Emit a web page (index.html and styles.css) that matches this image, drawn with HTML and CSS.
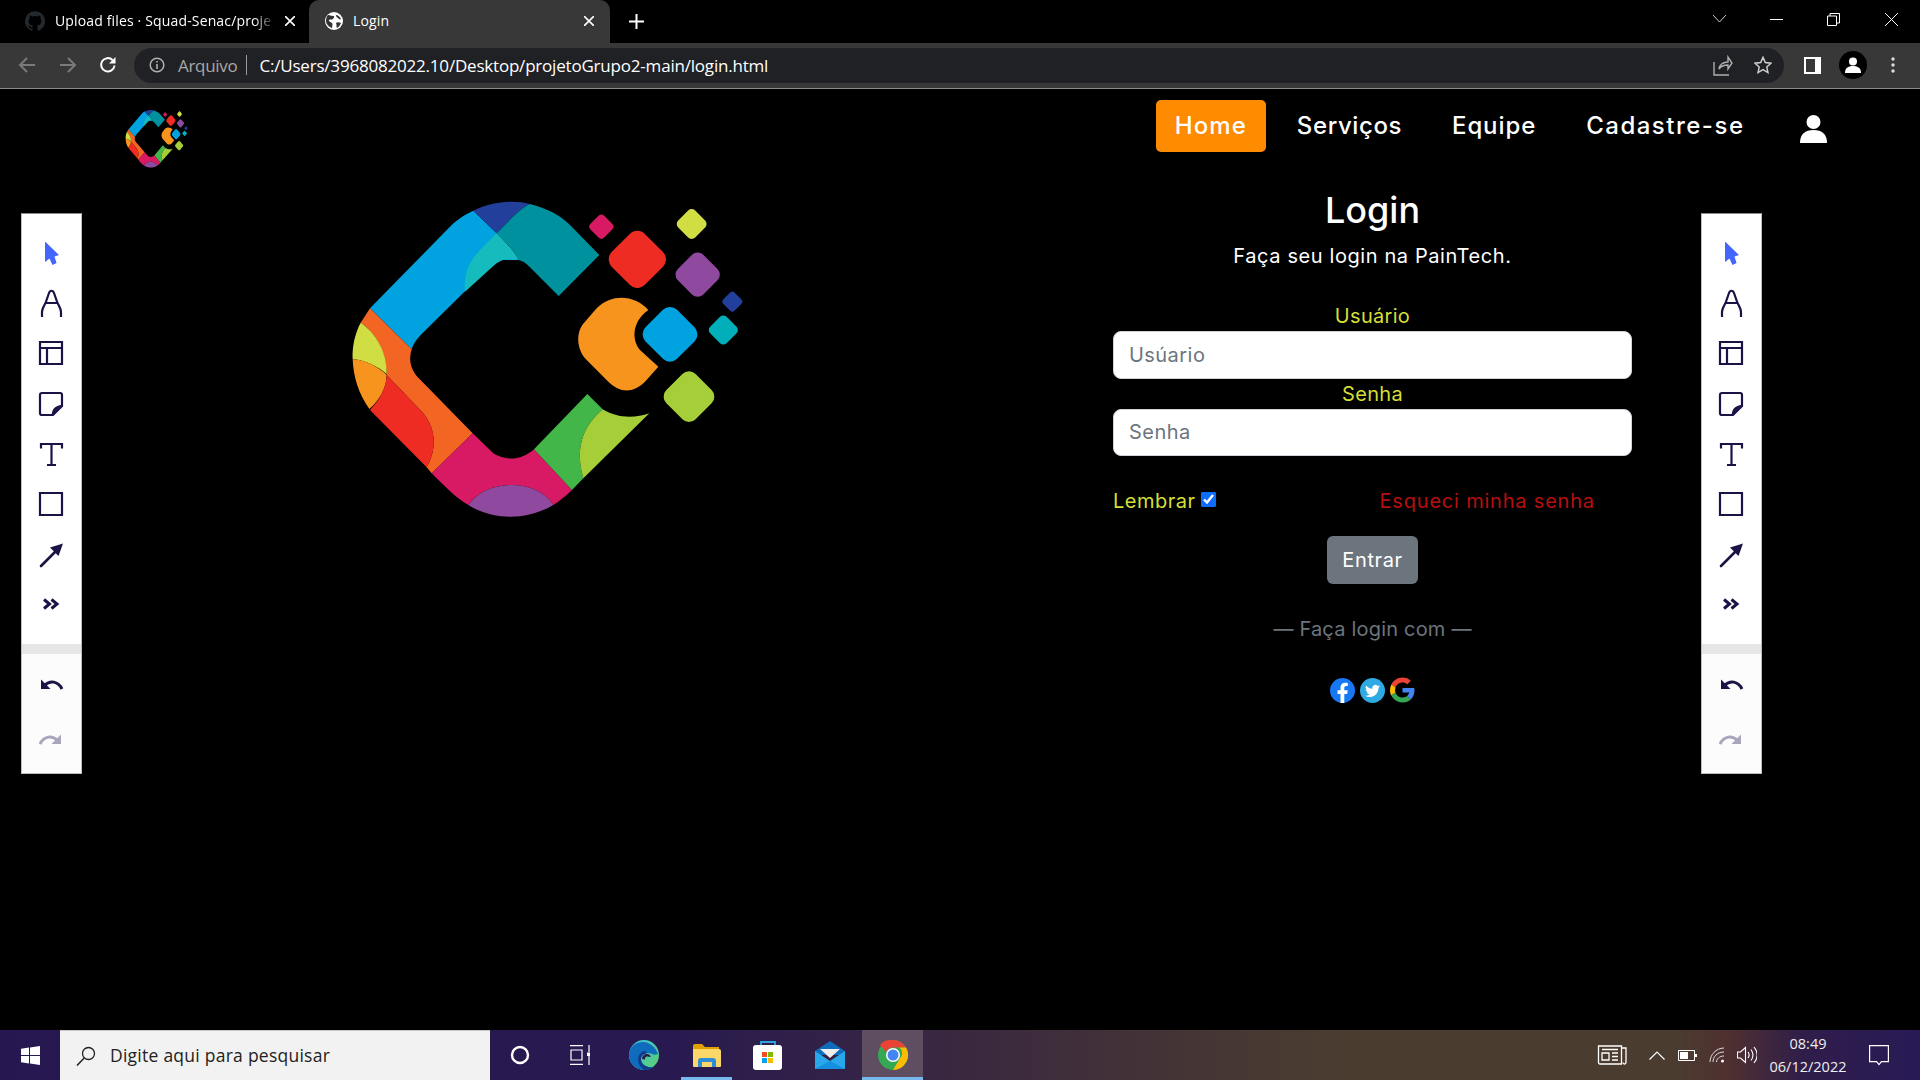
FILE: index.html
```html
<!DOCTYPE html>
<html lang="pt-BR">
<head>
<meta charset="utf-8">
<title>Login</title>
<link rel="stylesheet" href="styles.css">
</head>
<body>
<svg class="defs" aria-hidden="true">
  <defs>
    <symbol id="logo" viewBox="0 0 1320 1050" preserveAspectRatio="none">
      <path fill="#00a2e0" d="M430 92C400 105 380 120 360 140L120 385L245 508C250 490 262 475 275 462L500 240L570 240L500 160Z"/>
      <path fill="#15bbbd" d="M500 160C530 190 555 215 565 240C530 232 510 240 490 258L405 335C400 280 420 240 450 210Z"/>
      <path fill="#223f9c" d="M430 92C480 65 550 58 600 72C570 85 540 120 500 160Z"/>
      <path fill="#00919f" d="M600 72C650 85 690 105 720 135L808 225L686 348L600 262C590 250 578 243 565 240C555 215 530 190 500 160C540 120 570 85 600 72Z"/>
      <path fill="#f26522" d="M120 385L245 508C236 535 240 565 262 590L428 760L305 880L290 862C320 810 320 750 280 700L170 585C170 520 140 460 92 428Z"/>
      <path fill="#d0de44" d="M92 428C140 460 172 520 170 582C150 565 110 540 68 538C66 500 75 460 92 428Z"/>
      <path fill="#f7941d" d="M68 538C110 540 150 565 170 585C170 620 150 660 118 687C85 640 70 590 68 538Z"/>
      <path fill="#ef2c23" d="M170 585L280 700C320 750 320 810 290 862L120 690C150 660 170 620 170 585Z"/>
      <path fill="#d71a63" d="M428 760L490 820C530 845 575 840 612 808L726 930C700 955 685 965 670 975C620 895 470 895 415 975C380 955 350 925 305 880Z"/>
      <path fill="#8f4a9f" d="M415 975C470 895 620 895 670 975C590 1022 490 1022 415 975Z"/>
      <path fill="#43b649" d="M772 642L818 688C770 730 730 790 760 895L726 930L612 808Z"/>
      <path fill="#a6ce39" d="M818 688C860 715 915 715 958 700L760 895C730 790 770 730 818 688Z"/>
      <path fill="#f7941d" d="M955 390C920 350 850 335 800 385L765 425C735 455 740 510 770 540L835 605C870 640 910 640 945 605L985 560L930 510C905 480 905 425 955 390Z"/>
      <rect x="785" y="111" width="58" height="58" rx="12" fill="#d71a63" transform="rotate(45 814 140)"/>
      <rect x="1049" y="96" width="72" height="72" rx="15" fill="#d0de44" transform="rotate(45 1085 132)"/>
      <rect x="852" y="168" width="140" height="140" rx="32" fill="#ef2c23" transform="rotate(45 922 238)"/>
      <rect x="1049" y="230" width="108" height="108" rx="24" fill="#8f4a9f" transform="rotate(45 1103 284)"/>
      <rect x="1183" y="341" width="48" height="48" rx="10" fill="#223f9c" transform="rotate(45 1207 365)"/>
      <rect x="1145" y="415" width="70" height="70" rx="14" fill="#00afb9" transform="rotate(45 1180 450)"/>
      <rect x="953" y="396" width="134" height="134" rx="30" fill="#00a2e0" transform="rotate(45 1020 463)"/>
      <rect x="1015" y="588" width="124" height="124" rx="28" fill="#a6ce39" transform="rotate(45 1077 650)"/>
    </symbol>
    <symbol id="t-pointer" viewBox="0 0 30 30"><path fill="#4464ff" d="M9 3.500L23 17L18.500 18.500L20.500 25L16.500 27L13.500 20.500L9 24Z"/></symbol>
    <symbol id="t-pen" viewBox="0 0 30 30"><path fill="none" stroke="#1a1446" stroke-width="2.200" d="M6 29v-5c0-3 2-6 3.500-9L13 5c1-3 4-3 5 0l3.500 10c1.500 3 3.500 6 3.500 9v5M10 15h11"/></symbol>
    <symbol id="t-table" viewBox="0 0 30 30"><path fill="none" stroke="#1a1446" stroke-width="2.200" d="M4 4h22v22H4zM4 10h22M11 10v16"/></symbol>
    <symbol id="t-note" viewBox="0 0 30 30"><path fill="none" stroke="#1a1446" stroke-width="2.200" d="M6 4h18a2 2 0 0 1 2 2v11l-9 9H6a2 2 0 0 1-2-2V6a2 2 0 0 1 2-2z"/><path fill="#1a1446" d="M26 16l-10 11c-1-6 3-11 10-11z"/></symbol>
    <symbol id="t-text" viewBox="0 0 30 30"><path fill="none" stroke="#1a1446" stroke-width="2.200" d="M5 9.500V5h21v4.500M15.500 5v21M11 26h9"/></symbol>
    <symbol id="t-rect" viewBox="0 0 30 30"><path fill="none" stroke="#1a1446" stroke-width="2.200" d="M4 4h22v22H4z"/></symbol>
    <symbol id="t-arrow" viewBox="0 0 30 30"><path fill="none" stroke="#1a1446" stroke-width="2.600" stroke-linecap="round" d="M5 27L20 12"/><path fill="#1a1446" d="M27 4.500L14 8.500L22.500 17Z"/></symbol>
    <symbol id="t-more" viewBox="0 0 30 30"><path fill="none" stroke="#1a1446" stroke-width="3" d="M8 10.500l5.500 4.500-5.500 4.500M15.500 10.500L21 15l-5.500 4.500"/></symbol>
    <symbol id="t-undo" viewBox="0 0 30 30"><path fill="none" stroke="currentColor" stroke-width="3" d="M26 20C22 12 14 11 9 16"/><path fill="currentColor" d="M5 10.500V20h9.500Z"/></symbol>
  </defs>
</svg>

<header class="tabstrip">
  <div class="tab tab-inactive">
    <svg class="tab-icon" viewBox="0 0 24 24"><path fill="#24292e" d="M12 .3a12 12 0 00-3.800 23.400c.600.100.800-.300.800-.600v-2c-3.300.700-4-1.600-4-1.600-.600-1.400-1.400-1.800-1.400-1.800-1-.700.100-.700.100-.700 1.200 0 1.900 1.200 1.900 1.200 1 1.800 2.800 1.300 3.500 1 0-.800.400-1.300.700-1.600-2.700-.300-5.500-1.300-5.500-6 0-1.200.500-2.300 1.300-3.100-.200-.400-.600-1.600 0-3.200 0 0 1-.300 3.400 1.200a11.500 11.500 0 016 0c2.300-1.500 3.300-1.200 3.300-1.200.600 1.600.200 2.800 0 3.200.900.800 1.300 1.900 1.300 3.200 0 4.600-2.800 5.600-5.500 5.900.500.400.900 1 .9 2.200v3.300c0 .300.100.700.800.600A12 12 0 0012 .3"/></svg>
    <span class="tab-title tab-title-fade">Upload files · Squad-Senac/proje</span>
    <svg class="tab-close" viewBox="0 0 10 10"><path stroke="#fff" stroke-width="1.600" d="M0 0l10 10M10 0L0 10"/></svg>
  </div>
  <div class="tab tab-active">
    <svg class="tab-icon globe" viewBox="0 0 18 18"><circle cx="9" cy="9" r="9" fill="#fff"/><path fill="#333" d="M3 3c2 0 3 1 5 1s1 2 0 3-3 0-4 1 2 2 3 3 0 4 0 5C4 15 1 12 1 9s1-5 2-6zM11 3c2 0 4 2 5 4-1 1-2 0-3-1s-2-1-2-3zM11 11c1-1 3-1 5 0-1 2-2 4-4 5-1-1 0-3-1-5z"/></svg>
    <span class="tab-title">Login</span>
    <svg class="tab-close" viewBox="0 0 10 10"><path stroke="#fff" stroke-width="1.600" d="M0 0l10 10M10 0L0 10"/></svg>
  </div>
  <svg class="new-tab" viewBox="0 0 15 15"><path stroke="#fff" stroke-width="2" d="M7.500 0v15M0 7.500h15"/></svg>
  <div class="window-controls">
    <svg class="win-chevron" viewBox="0 0 13 8"><path fill="none" stroke="#ccc" d="M0 0l6.500 7L13 0"/></svg>
    <svg class="win-min" viewBox="0 0 13 13"><path stroke="#fff" d="M0 6.500h13"/></svg>
    <svg class="win-restore" viewBox="0 0 13 13"><path fill="none" stroke="#fff" d="M.5 3h9v9.500h-9zM3 3V.5h9.500V10H9.500"/></svg>
    <svg class="win-close" viewBox="0 0 13 13"><path stroke="#fff" d="M0 0l13 13M13 0L0 13"/></svg>
  </div>
</header>

<div class="browser-bar">
  <svg class="nav-btn" viewBox="0 0 18 18"><path fill="none" stroke="#7a7a7a" stroke-width="2" d="M17 9H2M9 2L2 9l7 7"/></svg>
  <svg class="nav-btn" viewBox="0 0 18 18"><path fill="none" stroke="#7a7a7a" stroke-width="2" d="M1 9h15M9 2l7 7-7 7"/></svg>
  <svg class="nav-btn" viewBox="0 0 18 18"><path fill="none" stroke="#fff" stroke-width="2" d="M15.500 9.500A6.700 6.700 0 1 1 13.500 4"/><path fill="#fff" d="M16.500 1v6.500H10Z"/></svg>
  <div class="address">
    <svg class="info" viewBox="0 0 16 16"><circle cx="8" cy="8" r="6.800" fill="none" stroke="#b0b0b0" stroke-width="1.500"/><path stroke="#b0b0b0" stroke-width="1.600" d="M8 7v5M8 4v1.600"/></svg>
    <span class="scheme">Arquivo</span>
    <span class="sep"></span>
    <span class="url">C:/Users/3968082022.10/Desktop/projetoGrupo2-main/login.html</span>
    <svg class="share" viewBox="0 0 20 22"><path fill="none" stroke="#b0b0b0" stroke-width="1.400" d="M1 8v13h15M6 15c1-5 5-7 9-7V3l4 6-4 6v-4c-4 0-7 1-9 4z"/></svg>
    <svg class="star" viewBox="0 0 20 20"><path fill="none" stroke="#d0d0d0" stroke-width="1.600" d="M10 1.500l2.600 5.800 6.300.700-4.700 4.200 1.300 6.200L10 15.200l-5.500 3.200 1.300-6.200L1.100 8l6.300-.700z"/></svg>
  </div>
  <div class="bar-right">
    <svg class="panel" viewBox="0 0 17 17"><path fill="#fff" fill-rule="evenodd" d="M0 0h17v17H0zM2 2v13h9V2z"/></svg>
    <svg class="avatar" viewBox="0 0 28 28"><circle cx="14" cy="14" r="14" fill="#000"/><circle cx="14" cy="10.500" r="4" fill="#fff"/><path fill="#fff" d="M6 22c0-5 3-7 8-7s8 2 8 7z"/></svg>
    <svg class="menu" viewBox="0 0 4 16"><circle cx="2" cy="2" r="1.700" fill="#ddd"/><circle cx="2" cy="8" r="1.700" fill="#ddd"/><circle cx="2" cy="14" r="1.700" fill="#ddd"/></svg>
  </div>
</div>

<main class="page">
  <nav class="topnav">
    <svg class="small-logo"><use href="#logo"/></svg>
    <div class="nav-links">
      <a class="nav-link nav-home">Home</a>
      <a class="nav-link nav-serv">Serviços</a>
      <a class="nav-link nav-equipe">Equipe</a>
      <a class="nav-link nav-cad">Cadastre-se</a>
      <svg class="nav-user" viewBox="0 0 27 28"><circle cx="13.500" cy="7" r="7" fill="#fff"/><path fill="#fff" d="M0 28c0-9 5-13 13.500-13S27 19 27 28z"/></svg>
    </div>
  </nav>

  <section class="content">
    <svg class="big-logo"><use href="#logo"/></svg>
    <form class="login">
      <h1 class="login-title">Login</h1>
      <p class="login-sub">Faça seu login na PainTech.</p>
      <label class="field-label field-first" for="u">Usuário</label>
      <input class="field field-tall" id="u" type="text" placeholder="Usúario">
      <label class="field-label" for="s">Senha</label>
      <input class="field field-short" id="s" type="password" placeholder="Senha">
      <div class="options">
        <label class="remember">Lembrar <input class="check" type="checkbox" checked></label>
        <a class="forgot">Esqueci minha senha</a>
      </div>
      <button class="submit" type="button">Entrar</button>
      <p class="divider">— Faça login com —</p>
      <div class="socials">
        <svg class="social" viewBox="0 0 25 25"><circle cx="12.500" cy="12.500" r="12.500" fill="#1877f2"/><path fill="#fff" d="M10.500 25V16H7.500v-3.700h3V9.500c0-3.100 1.900-4.800 4.600-4.800 1.300 0 2.700.2 2.700.2v3h-1.500c-1.500 0-2 .9-2 1.900v2.500h3.400l-.5 3.700h-2.900v9z"/></svg>
        <svg class="social" viewBox="0 0 25 25"><circle cx="12.500" cy="12.500" r="12.500" fill="#2daae1"/><g transform="translate(5 5.500) scale(.625)"><path fill="#fff" d="M23.953 4.570a10 10 0 01-2.825.775 4.958 4.958 0 002.163-2.723c-.951.555-2.005.959-3.127 1.184a4.920 4.920 0 00-8.384 4.482C7.690 8.095 4.067 6.130 1.640 3.162a4.822 4.822 0 00-.666 2.475c0 1.710.870 3.213 2.188 4.096a4.904 4.904 0 01-2.228-.616v.060a4.923 4.923 0 003.946 4.827 4.996 4.996 0 01-2.212.085 4.936 4.936 0 004.604 3.417 9.867 9.867 0 01-6.102 2.105c-.390 0-.779-.023-1.170-.067a13.995 13.995 0 007.557 2.209c9.053 0 13.998-7.496 13.998-13.985 0-.210 0-.420-.015-.630A9.935 9.935 0 0024 4.590z"/></g></svg>
        <svg class="social social-g" viewBox="0 0 48 48"><path fill="#EA4335" d="M24 9.500c3.540 0 6.710 1.220 9.210 3.600l6.850-6.850C35.900 2.380 30.470 0 24 0 14.620 0 6.510 5.380 2.560 13.220l7.980 6.190C12.430 13.720 17.740 9.500 24 9.500z"/><path fill="#4285F4" d="M46.980 24.550c0-1.570-.150-3.090-.380-4.550H24v9.020h12.940c-.580 2.960-2.260 5.480-4.780 7.180l7.730 6c4.510-4.180 7.090-10.360 7.090-17.650z"/><path fill="#FBBC05" d="M10.530 28.590c-.480-1.450-.760-2.990-.760-4.590s.270-3.140.760-4.590l-7.980-6.190C.920 16.460 0 20.120 0 24c0 3.880.920 7.540 2.560 10.780l7.970-6.190z"/><path fill="#34A853" d="M24 48c6.480 0 11.930-2.130 15.890-5.810l-7.730-6c-2.150 1.450-4.920 2.300-8.160 2.300-6.260 0-11.570-4.220-13.470-9.910l-7.980 6.190C6.510 42.620 14.620 48 24 48z"/></svg>
      </div>
    </form>
  </section>

  <aside class="drawbar drawbar-left">
    <div class="draw-main">
      <svg class="draw-icon"><use href="#t-pointer"/></svg>
      <svg class="draw-icon"><use href="#t-pen"/></svg>
      <svg class="draw-icon"><use href="#t-table"/></svg>
      <svg class="draw-icon"><use href="#t-note"/></svg>
      <svg class="draw-icon"><use href="#t-text"/></svg>
      <svg class="draw-icon"><use href="#t-rect"/></svg>
      <svg class="draw-icon"><use href="#t-arrow"/></svg>
      <svg class="draw-icon"><use href="#t-more"/></svg>
    </div>
    <div class="draw-sep"></div>
    <div class="draw-hist">
      <svg class="draw-icon undo"><use href="#t-undo"/></svg>
      <svg class="draw-icon redo"><use href="#t-undo"/></svg>
    </div>
  </aside>
  <aside class="drawbar drawbar-right">
    <div class="draw-main">
      <svg class="draw-icon"><use href="#t-pointer"/></svg>
      <svg class="draw-icon"><use href="#t-pen"/></svg>
      <svg class="draw-icon"><use href="#t-table"/></svg>
      <svg class="draw-icon"><use href="#t-note"/></svg>
      <svg class="draw-icon"><use href="#t-text"/></svg>
      <svg class="draw-icon"><use href="#t-rect"/></svg>
      <svg class="draw-icon"><use href="#t-arrow"/></svg>
      <svg class="draw-icon"><use href="#t-more"/></svg>
    </div>
    <div class="draw-sep"></div>
    <div class="draw-hist">
      <svg class="draw-icon undo"><use href="#t-undo"/></svg>
      <svg class="draw-icon redo"><use href="#t-undo"/></svg>
    </div>
  </aside>
</main>

<footer class="taskbar">
  <svg class="win-logo" viewBox="0 0 19 19"><path fill="#fff" d="M0 2.700L8 1.500v7.500H0zM9 1.400L19 0v9H9zM0 10h8v7.500L0 16.300zM9 10h10v9L9 17.600z"/></svg>
  <div class="search">
    <svg class="search-icon" viewBox="0 0 20 20"><circle cx="12.500" cy="7.500" r="6" fill="none" stroke="#222" stroke-width="1.300"/><path stroke="#222" stroke-width="1.500" d="M8.200 12L1 19.500"/></svg>
    <span class="search-text">Digite aqui para pesquisar</span>
  </div>
  <div class="task-apps">
    <div class="app app-plain"><svg class="cortana" viewBox="0 0 20 20"><circle cx="10" cy="10" r="8" fill="none" stroke="#fff" stroke-width="2.400"/></svg></div>
    <div class="app app-plain"><svg class="taskview" viewBox="0 0 20 20"><path fill="none" stroke="#fff" stroke-width="1.200" d="M0 .6h13M0 19.400h13M1 5h11v10H1zM19 0v7M19 11v9"/><rect x="17" y="7.500" width="3.500" height="3.500" fill="#fff"/></svg></div>
    <div class="app app-edge"><svg class="app-icon" viewBox="0 0 30 30"><defs><linearGradient id="eg" x1="0" y1="0" x2="1" y2="1"><stop offset="0" stop-color="#36c0e8"/><stop offset="1" stop-color="#5fd06a"/></linearGradient></defs><circle cx="15" cy="15" r="15" fill="url(#eg)"/><path fill="#0f6cbd" d="M14 2C6 2 0 8 0 15c0 8 7 15 15 15 4 0 7-1 10-3-5 1-13-1-13-8 0-3 3-6 7-6s5 3 10 1C27 8 21 2 14 2z"/><path fill="#123b8c" d="M12 19c0 7 8 9 13 8-3 2-6 3-10 3-4-3-6-7-6-11 0-4 3-7 6-8 2 0 3 1 3 2-3 1-6 3-6 6z"/><path fill="#281a50" d="M13 19c0-3 2.500-5 5-5s4 2 3.500 3c-1 0-2-.5-3.500-.5s-2 1-2 3c-1 0-3-.5-3-.5z"/></svg></div>
    <div class="app app-open"><svg class="app-icon folder" viewBox="0 0 28 23"><path fill="#e0a100" d="M0 2a2 2 0 0 1 2-2h7l3 3h14v4H0z"/><path fill="#fbd669" d="M0 5h26a2 2 0 0 1 2 2v15a1 1 0 0 1-1 1H1a1 1 0 0 1-1-1z"/><path fill="#2f8fd6" d="M5 23v-6a3 3 0 0 1 3-3h12a3 3 0 0 1 3 3v6h-4v-5H9v5z"/></svg></div>
    <div class="app app-store"><svg class="app-icon" viewBox="0 0 30 30"><path fill="none" stroke="#2aa7e0" stroke-width="1.800" d="M8 8V2h14v6"/><rect y="5" width="29" height="25" rx="3" fill="#fff"/><rect x="9" y="12" width="5" height="5" fill="#f25022"/><rect x="15" y="12" width="5" height="5" fill="#7fba00"/><rect x="9" y="18" width="5" height="5" fill="#00a4ef"/><rect x="15" y="18" width="5" height="5" fill="#ffb900"/></svg></div>
    <div class="app app-mail"><svg class="app-icon" viewBox="0 0 30 28"><path fill="#0f6cbd" d="M15 0L30 10v4H0v-4z"/><path fill="#eee" d="M5 8h20l-10 9z"/><path fill="#28a8ea" d="M0 10l15 10 15-10v18H0z"/><path fill="#1490df" d="M0 28l15-8 15 8z"/></svg></div>
    <div class="app app-active"><svg class="app-icon" viewBox="0 0 30 30"><circle cx="15" cy="15" r="15" fill="#34a853"/><path fill="#ea4335" d="M15 0a15 15 0 0 1 13 7.500H15a7.500 7.500 0 0 0-7 5L2 4.700A15 15 0 0 1 15 0z"/><path fill="#fbbc05" d="M28 7.500A15 15 0 0 1 15 30l6.500-11a7.500 7.500 0 0 0 0-11.500z"/><circle cx="15" cy="15" r="7" fill="#fff"/><circle cx="15" cy="15" r="5.500" fill="#4285f4"/></svg></div>
  </div>
  <div class="tray">
    <svg class="tray-news" viewBox="0 0 30 20"><path fill="none" stroke="#fff" stroke-width="1.300" d="M1.500 1h23v18H3a1.500 1.500 0 0 1-1.500-1.500zM24.500 3H29v14.500a1.500 1.500 0 0 1-3 0M5 4.500h16M5 8h7v7H5zM15 8h6M15 11.500h6M15 15h6"/></svg>
    <svg class="tray-caret" viewBox="0 0 16 9"><path fill="none" stroke="#fff" stroke-width="1.200" d="M.5 8.500L8 1l7.500 7.500"/></svg>
    <svg class="tray-batt" viewBox="0 0 19 11"><path fill="none" stroke="#fff" d="M.5.500h16v10H.5z"/><rect x="2" y="2" width="8" height="7" fill="#fff"/><rect x="17" y="4" width="2" height="3" fill="#fff"/></svg>
    <svg class="tray-wifi" viewBox="0 0 16 16"><g fill="none" stroke="#ddd" stroke-width="1"><path d="M1 15C1 8 7 1 15 1"/><path d="M4 15c0-5 4-10 11-10"/><path d="M7.500 15c0-3 3-6 7.500-6"/></g><circle cx="13.500" cy="14" r="1.500" fill="#fff"/></svg>
    <svg class="tray-vol" viewBox="0 0 20 20"><path fill="none" stroke="#fff" stroke-width="1.100" d="M.5 7h3l5-4.500v15L3.500 13h-3zM11 7c1.500 2 1.500 4 0 6M14 4.500c2.500 3.500 2.500 7.500 0 11M17 2c4 5 4 11 0 16"/></svg>
    <div class="clock"><span>08:49</span><span>06/12/2022</span></div>
    <svg class="tray-note" viewBox="0 0 20 21"><path fill="none" stroke="#fff" stroke-width="1.200" d="M.6.600h18.800v16h-7l-2.400 3-2.400-3h-7z"/></svg>
  </div>
</footer>
</body>
</html>
```

FILE: styles.css
```css
* { box-sizing: border-box; }
html, body { margin: 0; height: 100%; }
body {
  width: 1920px;
  height: 1080px;
  overflow: hidden;
  display: flex;
  flex-direction: column;
  background: #000;
  font-family: "Inter", "Liberation Sans", sans-serif;
  color: #fff;
}
.defs { width: 0; height: 0; position: absolute; }

/* browser tab strip */
.tabstrip { height: 43px; display: flex; align-items: stretch; background: #000; flex: none; }
.tab { display: flex; align-items: center; padding-bottom: 2px; }
.tab-inactive { width: 309px; padding-left: 25px; padding-right: 14px; }
.tab-active { width: 301px; padding-left: 16px; padding-right: 16px; background: #383838; border-radius: 10px 10px 0 0; }
.tab-icon { width: 20px; height: 20px; flex: none; }
.globe { width: 18px; height: 18px; }
.tab-title {
  font: 14px "Open Sans", "Liberation Sans", sans-serif;
  margin-left: 10px;
  white-space: nowrap;
  letter-spacing: .15px;
}
.tab-title-fade {
  -webkit-mask-image: linear-gradient(90deg, #000 92%, rgba(0, 0, 0, .2) 100%);
  mask-image: linear-gradient(90deg, #000 92%, rgba(0, 0, 0, .2) 100%);
}
.tab-close { width: 10px; height: 10px; margin-left: auto; flex: none; }
.new-tab { width: 15px; height: 15px; align-self: center; margin-left: 19px; }
.window-controls { margin-left: auto; width: 300px; display: flex; align-items: center; padding-left: 93px; }
.win-chevron { width: 13px; height: 8px; margin-bottom: 5px; }
.win-min { width: 13px; height: 13px; margin-left: 44px; margin-bottom: 5px; }
.win-restore { width: 13px; height: 13px; margin-left: 44px; margin-bottom: 5px; }
.win-close { width: 13px; height: 13px; margin-left: 45px; margin-bottom: 5px; }

/* browser toolbar */
.browser-bar { height: 46px; flex: none; display: flex; align-items: center; padding: 0 0 1px 7px; background: #383838; border-bottom: 1px solid #8a8a8a; }
.nav-btn { width: 18px; height: 18px; margin: 0 11px; flex: none; }
.nav-btn:nth-child(2) { margin-left: 12px; margin-right: 11px; }
.nav-btn:nth-child(3) { margin-right: 10px; }
.address { width: 1650px; height: 35px; margin-left: 7px; flex: none; background: #202124; border-radius: 18px; display: flex; align-items: center; padding: 0 12px 0 15px; font: 17px "Open Sans", "Liberation Sans", sans-serif; letter-spacing: -.2px; }
.info { width: 16px; height: 16px; flex: none; }
.scheme { margin-left: 13px; color: #a8a8a8; letter-spacing: -.3px; }
.sep { width: 1px; height: 20px; background: #9a9a9a; margin: 0 12px 0 9px; }
.url { color: #fff; white-space: nowrap; }
.share { width: 20px; height: 22px; margin-left: auto; }
.star { width: 18px; height: 18px; margin-left: 21px; }
.bar-right { display: flex; align-items: center; flex: 1; padding-left: 20px; }
.panel { width: 17px; height: 17px; }
.avatar { width: 28px; height: 28px; margin-left: 18px; }
.menu { width: 4px; height: 16px; margin-left: 24px; }

/* page */
.page { flex: 1; position: relative; background: #000; min-height: 0; }
.topnav { height: 91px; display: flex; align-items: flex-start; padding: 11px 93px 0 122px; }
.small-logo { width: 70px; height: 64px; margin-top: 6px; flex: none; }
.nav-links { margin-left: auto; display: flex; align-items: center; height: 52px; }
.nav-link { font-size: 24px; font-weight: 500; letter-spacing: 1.100px; color: #fff; line-height: 52px; }
.nav-home { background: #ff8c00; border-radius: 5px; padding: 0 18px; width: 110px; text-align: center; }
.nav-serv { margin-left: 31px; letter-spacing: .6px; }
.nav-equipe { margin-left: 50px; letter-spacing: .9px; }
.nav-cad { margin-left: 50px; letter-spacing: 1.500px; }
.nav-user { width: 27px; height: 28px; margin-left: 55.500px; margin-top: 5px; }

.content { display: flex; align-items: flex-start; padding: 0 288px 0 330px; }
.big-logo { width: 440px; height: 350px; flex: none; }
.login { width: 519px; margin-left: auto; display: flex; flex-direction: column; align-items: center; padding-top: 10px; }
.login-title { margin: 0; font-size: 36px; line-height: 40px; font-weight: 500; }
.login-sub { margin: 11px 0 0; font-size: 20px; line-height: 30px; font-weight: 400; letter-spacing: .6px; }
.field-label { font-size: 20px; line-height: 28px; color: #d4df36; margin-top: 0; margin-bottom: 1px; letter-spacing: .3px; }
.field-first { margin-top: 31px; }
.field { width: 100%; height: 47px; border: 1px solid #ced4da; border-radius: 8px; background: #fff; padding: 0 15px; font: 20px "Inter", sans-serif; letter-spacing: .45px; color: #212529; flex: none; }
.field-tall { height: 48px; margin-bottom: 1px; }
.field-short { padding-bottom: 2px; }
.field::placeholder { color: #6c757d; opacity: 1; }
.options { width: 100%; height: 30px; margin-top: 30px; display: flex; align-items: center; }
.remember { font-size: 20px; line-height: 30px; color: #d4df36; display: flex; align-items: center; letter-spacing: .5px; }
.check { width: 15px; height: 15px; margin: 0 0 4px 5px; accent-color: #0d6efd; }
.forgot { font-size: 20px; color: #b70f0f; margin-left: 164px; white-space: nowrap; letter-spacing: .8px; }
.submit { width: 91px; height: 48px; margin-top: 20px; border: 0; border-radius: 6px; background: #6c757d; color: #fff; font: 20px "Inter", sans-serif; letter-spacing: .6px; }
.divider { margin: 30px 0 0; font-size: 20px; line-height: 30px; color: #6c757d; letter-spacing: .2px; }
.socials { margin-top: 33px; display: flex; gap: 5px; align-items: flex-end; height: 26px; }
.social { width: 25px; height: 25px; }
.social-g { height: 26px; }

/* floating draw toolbars */
.drawbar { position: absolute; top: 124px; width: 61px; height: 561px; background: #fff; border: 1px solid #bdbdbd; border-top-color: #888; display: flex; flex-direction: column; }
.drawbar-left { left: 21px; }
.drawbar-right { left: 1701px; }
.draw-main { height: 430px; padding-top: 24px; display: flex; flex-direction: column; align-items: center; gap: 20.200px; }
.draw-sep { height: 10px; background: #e6e6e6; flex: none; }
.draw-hist { flex: 1; padding-top: 15px; display: flex; flex-direction: column; align-items: center; gap: 25px; background: #fcfcfc; }
.draw-icon { width: 30px; height: 30px; flex: none; margin-right: 2px; }
.undo { color: #1a1446; }
.redo { color: #a8a6bd; transform: scaleX(-1); }

/* windows taskbar */
.taskbar { height: 50px; flex: none; display: flex; align-items: center; background: linear-gradient(90deg, #261750 0%, #281a50 35%, #3a2840 50%, #453535 62%, #4a3d30 70%, #4a3d30 87%, #4f3030 90%, #2f1d4a 94%, #281a55 100%); }
.win-logo { width: 19px; height: 19px; margin-left: 21px; flex: none; }
.search { width: 430px; height: 50px; margin-left: 20px; background: #f2f2f2; border-top: 1px solid #c8c8c8; display: flex; align-items: center; padding-left: 16px; flex: none; }
.search-icon { width: 20px; height: 20px; flex: none; }
.search-text { margin: 0 0 2px 14px; font: 17.500px "Open Sans", "Liberation Sans", sans-serif; color: #222; letter-spacing: .25px; }
.task-apps { display: flex; height: 50px; }
.app { height: 50px; display: flex; align-items: center; justify-content: center; flex: none; border-bottom: 3px solid transparent; padding-top: 3px; }
.app-plain { width: 60px; }
.app-edge { width: 68px; }
.app-open { width: 51px; margin-left: 3px; border-bottom-color: #76b9ed; }
.app-store { width: 72px; }
.app-mail { width: 52px; }
.app-active { width: 61px; margin-left: 6px; background: #5f4d62; border-bottom-color: #76b9ed; }
.cortana { width: 20px; height: 20px; }
.taskview { width: 20px; height: 20px; }
.app-icon { width: 30px; height: 30px; }
.folder { width: 28px; height: 23px; }
.tray { margin-left: auto; display: flex; align-items: center; width: 323px; padding-right: 31px; }
.tray-news { width: 30px; height: 20px; }
.tray-caret { width: 16px; height: 9px; margin-left: 22px; }
.tray-batt { width: 19px; height: 11px; margin-left: 13px; }
.tray-wifi { width: 16px; height: 16px; margin-left: 12px; }
.tray-vol { width: 20px; height: 20px; margin-left: 12px; }
.clock { display: flex; flex-direction: column; align-items: center; margin-left: 13px; font: 14.500px/23px "Open Sans", "Liberation Sans", sans-serif; color: #eee; width: 76px; }
.tray-note { width: 20px; height: 21px; margin-left: auto; }
```
